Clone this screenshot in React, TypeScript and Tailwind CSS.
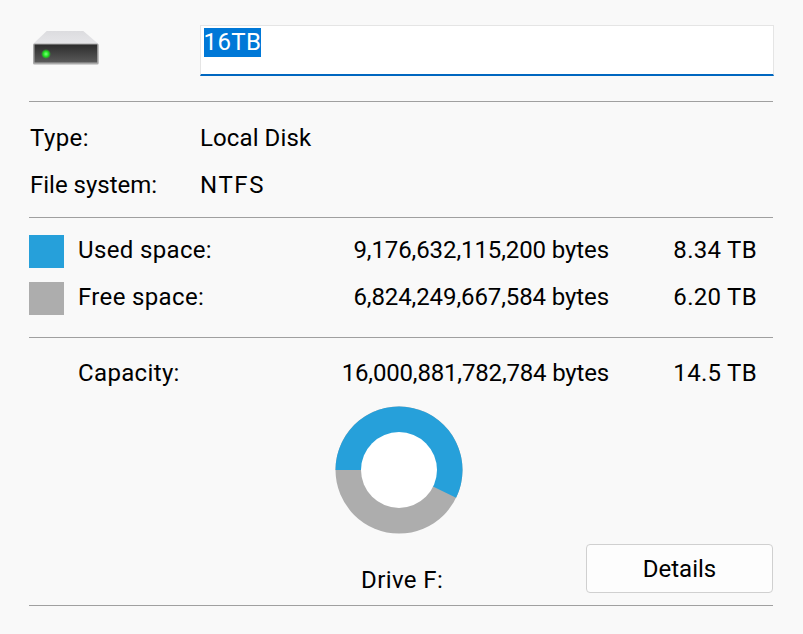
const F = { fontFamily: 'Roboto, "Open Sans", sans-serif' };

function DriveIcon() {
  return (
    <svg width="68" height="36" viewBox="0 0 68 36" className="block">
      <defs>
        <linearGradient id="front" x1="0" y1="0" x2="0" y2="1">
          <stop offset="0" stopColor="#2c2c2c" />
          <stop offset="1" stopColor="#5a5a5a" />
        </linearGradient>
        <linearGradient id="top" x1="0" y1="0" x2="0" y2="1">
          <stop offset="0" stopColor="#dcdcdf" />
          <stop offset="1" stopColor="#e6e6e9" />
        </linearGradient>
        <radialGradient id="led">
          <stop offset="0" stopColor="#7dff7d" />
          <stop offset="0.55" stopColor="#1fe01f" />
          <stop offset="1" stopColor="#1fd01f" stopOpacity="0" />
        </radialGradient>
      </defs>
      <path d="M14.7 1 H51.3 L66.5 14 H1 Z" fill="url(#top)" />
      <rect x="1" y="13.5" width="65.7" height="21" rx="1.5" fill="#a9a9a9" />
      <rect x="2.5" y="14.5" width="62.7" height="18" fill="url(#front)" />
      <circle cx="14" cy="24" r="5" fill="url(#led)" />
    </svg>
  );
}

function Donut() {
  return (
    <svg width="128" height="128" viewBox="0 0 128 128" className="block">
      <circle cx="64" cy="64" r="63.5" fill="#adadad" />
      <path d="M0.5 64 A63.5 63.5 0 1 1 121.1 91.8 L64 64 Z" fill="#26a0da" />
      <circle cx="64" cy="64" r="38" fill="#ffffff" />
    </svg>
  );
}

const Rule = () => <div className="h-px bg-[#a0a0a0]" />;

function SpaceRow({ swatch, label, bytes, size, className, bytesClass }: { swatch?: string; label: string; bytes: string; size: string; className: string; bytesClass: string }) {
  return (
    <div className={`flex items-center ${className}`}>
      <div className="w-[35px] h-[33px]" style={swatch ? { backgroundColor: swatch } : undefined} />
      <div className="ml-[14px] w-[200px] mt-[-3px] tracking-[0.35px]">{label}</div>
      <div className={`w-[331px] text-right mt-[-3px] ${bytesClass}`}>{bytes}</div>
      <div className="w-[148px] text-right mt-[-3px] tracking-[0.3px]">{size}</div>
    </div>
  );
}

export default function App() {
  return (
    <div style={F} className="w-[803px] h-[634px] overflow-hidden bg-[#f9f9f9] text-black text-[24px] leading-[30px] pl-[29px] pr-[30px] pt-[25px]">
      <div className="flex h-[51px]">
        <div className="w-[171px] pl-[3px] pt-[5px]">
          <DriveIcon />
        </div>
        <div className="flex-1 bg-white border border-[#e5e5e5] border-b-2 border-b-[#0067c0] pl-[2.5px] pt-[1px] mr-[-1px]">
          <span className="inline-block h-[29px] leading-[28px] bg-[#0078d7] text-white tracking-[0.4px]">16TB</span>
        </div>
      </div>
      <div className="mt-[25px]"><Rule /></div>
      <div className="flex items-center mt-[21px] pl-[1px]">
        <div className="w-[170px] tracking-[0.4px]">Type:</div>
        <div className="tracking-[0.1px]">Local Disk</div>
      </div>
      <div className="flex items-center mt-[17px] pl-[1px]">
        <div className="w-[170px]">File system:</div>
        <div className="tracking-[1.6px]">NTFS</div>
      </div>
      <div className="mt-[17px]"><Rule /></div>
      <SpaceRow swatch="#26a0da" label="Used space:" bytes="9,176,632,115,200 bytes" size="8.34 TB" className="mt-[17px]" bytesClass="tracking-[-0.1px]" />
      <SpaceRow swatch="#adadad" label="Free space:" bytes="6,824,249,667,584 bytes" size="6.20 TB" className="mt-[14px]" bytesClass="tracking-[-0.1px]" />
      <div className="mt-[22px]"><Rule /></div>
      <SpaceRow label="Capacity:" bytes="16,000,881,782,784 bytes" size="14.5 TB" className="mt-[20px]" bytesClass="tracking-[-0.17px]" />
      <div className="flex justify-center mt-[15px] ml-[-4px]">
        <Donut />
      </div>
      <div className="flex items-start mt-[10px] h-[49px]">
        <div className="w-[557px] pl-[332px] pt-[21px] tracking-[0.4px]">Drive F:</div>
        <button className="w-[187px] h-[49px] bg-[#fdfdfd] border border-[#d0d0d0] rounded-[4px] leading-none">Details</button>
      </div>
      <div className="mt-[12px]"><Rule /></div>
    </div>
  );
}
